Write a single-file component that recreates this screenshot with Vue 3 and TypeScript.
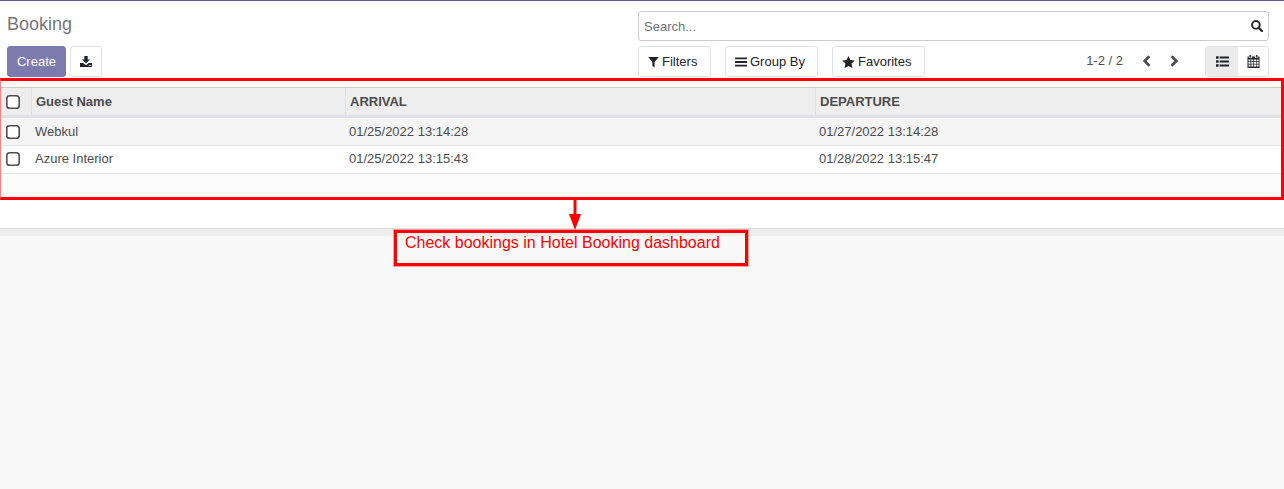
<script setup lang="ts">
interface Row { name: string; arrival: string; departure: string }
const rows: Row[] = [
  { name: 'Webkul', arrival: '01/25/2022 13:14:28', departure: '01/27/2022 13:14:28' },
  { name: 'Azure Interior', arrival: '01/25/2022 13:15:43', departure: '01/28/2022 13:15:47' },
]
</script>

<template>
  <div class="page">
    <header class="panel">
      <div class="left">
        <h1 class="title">Booking</h1>
        <div class="actions">
          <button class="btn primary">Create</button>
          <button class="btn icon-btn" aria-label="Download">
            <svg width="12" height="11" viewBox="0 0 12 11"><path fill="#212529" d="M4.3 0h3.4v3.6h2.2L6 7.4 2.1 3.6h2.2zM0 7h3.2L6 9.3 8.8 7H12v4H0z"/><rect x="8.6" y="9" width="1" height="1" fill="#fff"/><rect x="10.2" y="9" width="1" height="1" fill="#fff"/></svg>
          </button>
        </div>
      </div>
      <div class="right">
        <div class="search">
          <span class="placeholder">Search...</span>
          <svg width="12" height="12" viewBox="0 0 12 12"><circle cx="4.9" cy="4.9" r="3.8" fill="none" stroke="#2b2b2b" stroke-width="2"/><path d="M7.8 7.8l3.2 3.2" stroke="#2b2b2b" stroke-width="2.4" stroke-linecap="round"/></svg>
        </div>
        <div class="tools">
          <div class="filters">
            <button class="btn tool filter-btn">
              <svg width="11" height="12" viewBox="0 0 11 12"><path fill="#212529" d="M0.2 1h10.6L6.6 6v5.6L4.4 10V6z"/></svg>
              Filters
            </button>
            <button class="btn tool wide-btn">
              <svg width="12" height="12" viewBox="0 0 12 12"><path fill="#212529" d="M0 1.5h12v1.8H0zM0 5.1h12v1.8H0zM0 8.7h12v1.8H0z"/></svg>
              Group By
            </button>
            <button class="btn tool wide-btn">
              <svg width="13" height="12" viewBox="0 0 13 12"><path fill="#212529" d="M6.5 0l1.9 4 4.4.6-3.2 3 .8 4.4-3.9-2.1L2.6 12l.8-4.4-3.2-3 4.4-.6z"/></svg>
              Favorites
            </button>
          </div>
          <div class="pager">
            <span class="count">1-2 / 2</span>
            <svg class="chev" width="9" height="12" viewBox="0 0 9 12"><path d="M7.4 1.3L2.6 6l4.8 4.7" fill="none" stroke="#4c4c4c" stroke-width="2.6"/></svg>
            <svg class="chev" width="9" height="12" viewBox="0 0 9 12"><path d="M1.6 1.3L6.4 6l-4.8 4.7" fill="none" stroke="#4c4c4c" stroke-width="2.6"/></svg>
          </div>
          <div class="views">
            <button class="view active" aria-label="List">
              <svg width="13" height="11" viewBox="0 0 13 11"><path fill="#212529" d="M0 .2h2.6v2.6H0zM0 4.2h2.6v2.6H0zM0 8.2h2.6v2.6H0zM3.6 .6H13v1.9H3.6zM3.6 4.6H13v1.9H3.6zM3.6 8.6H13v1.9H3.6z"/></svg>
            </button>
            <button class="view" aria-label="Calendar">
              <svg width="13" height="13" viewBox="0 0 13 13"><path fill="#212529" d="M2.5 0h1.6v2.4H2.5zM8.9 0h1.6v2.4H8.9zM.5 1.5h1.4v1.5h3V1.5h3.2v1.5h3V1.5h1.4V13H.5z"/><path fill="#fff" d="M1.5 4.5h2v1.7h-2zM4.3 4.5h2v1.7h-2zM7 4.5h2v1.7H7zM9.6 4.5h2v1.7h-2zM1.5 7h2v1.7h-2zM4.3 7h2v1.7h-2zM7 7h2v1.7H7zM9.6 7h2v1.7h-2zM1.5 9.6h2v2h-2zM4.3 9.6h2v2h-2zM7 9.6h2v2H7zM9.6 9.6h2v2h-2z"/></svg>
            </button>
          </div>
        </div>
      </div>
    </header>

    <table class="list">
      <colgroup>
        <col class="c0" /><col class="c1" /><col class="c2" /><col />
      </colgroup>
      <thead>
        <tr>
          <th>
            <svg class="check" width="14" height="14" viewBox="0 0 14 14"><rect x=".8" y=".8" width="12.4" height="12.4" rx="2.8" fill="#fff" stroke="#505050" stroke-width="1.6"/></svg>
          </th>
          <th>Guest Name</th>
          <th>ARRIVAL</th>
          <th>DEPARTURE</th>
        </tr>
      </thead>
      <tbody>
        <tr v-for="row in rows" :key="row.name">
          <td>
            <svg class="check" width="14" height="14" viewBox="0 0 14 14"><rect x=".8" y=".8" width="12.4" height="12.4" rx="2.8" fill="#fff" stroke="#505050" stroke-width="1.6"/></svg>
          </td>
          <td>{{ row.name }}</td>
          <td>{{ row.arrival }}</td>
          <td>{{ row.departure }}</td>
        </tr>
      </tbody>
    </table>
    <div class="filler"></div>
    <div class="gap"></div>
    <div class="band"></div>
    <div class="rest"></div>

    <div class="mark-table"></div>
    <svg class="mark-arrow" width="14" height="31" viewBox="0 0 14 31"><path d="M7 0v16" stroke="#f00" stroke-width="3"/><path d="M1 15h12L7 31z" fill="#f00"/></svg>
    <div class="mark-note">Check bookings in Hotel Booking dashboard</div>
  </div>
</template>

<style>
html, body { margin: 0; background: #fff; }
</style>

<style scoped>
.page {
  position: relative;
  width: 1284px;
  height: 489px;
  overflow: hidden;
  display: flex;
  flex-direction: column;
  font-family: "Liberation Sans", Arial, sans-serif;
  font-size: 13px;
  color: #4c4c4c;
  background: #fff;
}
.panel {
  display: flex;
  height: 87px;
  box-sizing: border-box;
  border-top: 1px solid #5f5e97;
  padding: 10px 15px 0 7px;
  justify-content: space-between;
  flex: none;
}
.title {
  margin: 0;
  font-size: 18px;
  font-weight: 400;
  line-height: 26px;
  color: #777;
}
.actions { display: flex; gap: 4px; margin-top: 9px; }
.btn {
  font: inherit;
  height: 31px;
  box-sizing: border-box;
  border: 1px solid #dee2e6;
  border-radius: 3px;
  background: #fff;
  color: #212529;
  padding: 0;
}
.primary {
  width: 59px;
  background: #7c7bad;
  border-color: #7c7bad;
  color: #fff;
}
.icon-btn { width: 32px; display: flex; align-items: center; justify-content: center; }
.right { width: 631px; display: flex; flex-direction: column; gap: 5px; }
.search {
  height: 30px;
  box-sizing: border-box;
  border: 1px solid #ccc;
  border-radius: 3px;
  display: flex;
  align-items: center;
  justify-content: space-between;
  padding: 0 5px 0 5px;
}
.placeholder { color: #6c757d; }
.tools { display: flex; align-items: flex-start; }
.filters { display: flex; gap: 14px; }
.tool {
  display: flex;
  align-items: center;
  gap: 3px;
  padding: 0 0 0 9px;
}
.filter-btn { width: 73px; }
.wide-btn { width: 93px; }
.pager {
  margin-left: auto;
  display: flex;
  align-items: center;
  height: 29px;
}
.count { color: #4c4c4c; margin-right: 19px; }
.chev + .chev { margin-left: 19px; }
.views {
  display: flex;
  margin-left: 26px;
  border: 1px solid #dee2e6;
  border-radius: 3px;
  height: 31px;
  box-sizing: border-box;
  overflow: hidden;
}
.view {
  width: 30px;
  padding: 0;
  border: 0;
  background: #fff;
  display: flex;
  align-items: center;
  justify-content: center;
}
.view.active { background: #ebebeb; width: 32px; }
.list {
  width: 1284px;
  table-layout: fixed;
  border-collapse: separate;
  border-spacing: 0;
  flex: none;
  margin: 0;
}
.c0 { width: 31px; }
.c1 { width: 314px; }
.c2 { width: 470px; }
th {
  height: 31px;
  padding: 0 3px 0 4px;
  box-sizing: border-box;
  background: #eee;
  border-top: 1px solid #ccc;
  border-bottom: 3px solid #dee2e6;
  border-left: 1px solid #dee2e6;
  font-weight: 700;
  text-align: left;
  color: #4c4c4c;
}
th:first-child { border-left: 0; }
td {
  height: 28px;
  padding: 0 3px 2px 4px;
  box-sizing: border-box;
  border-bottom: 1px solid #dee2e6;
  background: #fff;
}
tbody tr:first-child td { background: #f5f5f5; padding-bottom: 0; }
th:first-child { padding: 0 0 0 6px; }
td:first-child { padding-left: 6px; padding-right: 0; }
.check { display: block; }
.filler { height: 23px; background: #fbfbfb; flex: none; }
.gap { height: 31px; background: #fff; flex: none; }
.band { height: 8px; box-sizing: border-box; background: #eee; border-top: 1px solid #dedede; flex: none; }
.rest { flex: 1; background: #f9f9f9; }

.mark-table {
  position: absolute;
  left: 0;
  top: 78px;
  width: 1284px;
  height: 122px;
  box-sizing: border-box;
  border: 3px solid #f00;
  border-left: 1px solid #ff8080;
}
.mark-arrow { position: absolute; left: 568px; top: 199px; }
.mark-note {
  position: absolute;
  left: 394px;
  top: 230px;
  width: 354px;
  height: 36px;
  box-sizing: border-box;
  border: 3px solid #f00;
  box-shadow: 0 0 0 1px rgba(255, 0, 0, 0.35);
  padding: 1px 0 0 8px;
  font-size: 16px;
  line-height: 18px;
  color: #f00;
}
</style>
